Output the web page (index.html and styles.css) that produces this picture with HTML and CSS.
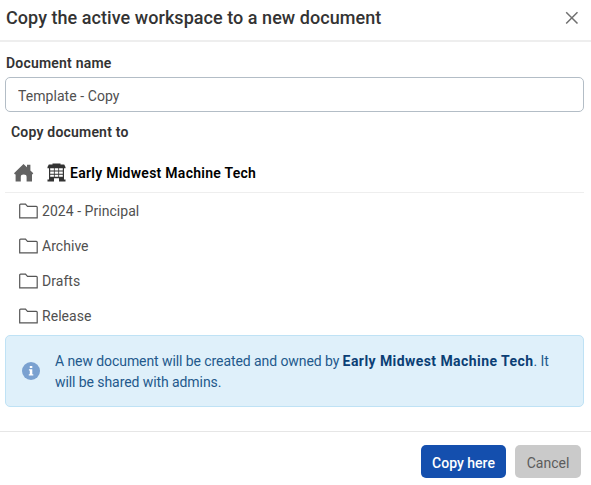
FILE: index.html
```html
<!DOCTYPE html>
<html lang="en">
<head>
<meta charset="utf-8">
<title>Copy workspace</title>
<link rel="stylesheet" href="styles.css">
</head>
<body>
<div class="dialog">
  <header class="header">
    <h1 class="title">Copy the active workspace to a new document</h1>
    <button class="close" aria-label="Close"><svg width="14" height="14" viewBox="0 0 14 14"><path d="M1.2 1.2 12.5 12.5M12.5 1.2 1.2 12.5"/></svg></button>
  </header>
  <main class="body">
    <label class="label" for="name">Document name</label>
    <input class="input" id="name" value="Template - Copy">
    <div class="label dest">Copy document to</div>
    <div class="crumbs">
      <svg class="home" width="20" height="19" viewBox="0 0 20 19"><path d="M0 10.2 9.5 1 13 4.3V1.7h3.4v5.8l2.9 2.7-1 1.2-.3-.2V18.4h-5.4v-4.5q0-2.3-2.9-2.3t-2.9 2.3v4.5H1.6v-7.2l-.5.3z"/></svg>
      <svg class="company" width="19" height="19" viewBox="0 0 19 19"><path fill-rule="evenodd" d="M5.5.4h8v1.1h3.7l1.3 2.6v1.1H17v11.4h1.5v1.9H12v-3.2H7v3.2H.5v-1.9H2V5.2H.5V4.1l1.3-2.6h3.7zM3.2 5.2v2.2h3.7V5.2zm4.5 0v2.2h3.6V5.2zm4.4 0v2.2h3.7V5.2zM3.2 8.5v2.2h3.7V8.5zm4.5 0v2.2h3.6V8.5zm4.4 0v2.2h3.7V8.5zM3.2 11.8v2h3.7v-2zm4.5 0v2h3.6v-2zm4.4 0v2h3.7v-2z"/></svg>
      <span class="crumb-name">Early Midwest Machine Tech</span>
    </div>
    <ul class="folders">
      <li class="folder"><svg width="19" height="16" viewBox="0 0 19 16"><path d="M.7 14.8V2.1q0-.9.9-.9h4.9l2 2.1h8.8q.9 0 .9.9v10.6z"/></svg><span>2024 - Principal</span></li>
      <li class="folder"><svg width="19" height="16" viewBox="0 0 19 16"><path d="M.7 14.8V2.1q0-.9.9-.9h4.9l2 2.1h8.8q.9 0 .9.9v10.6z"/></svg><span>Archive</span></li>
      <li class="folder"><svg width="19" height="16" viewBox="0 0 19 16"><path d="M.7 14.8V2.1q0-.9.9-.9h4.9l2 2.1h8.8q.9 0 .9.9v10.6z"/></svg><span>Drafts</span></li>
      <li class="folder"><svg width="19" height="16" viewBox="0 0 19 16"><path d="M.7 14.8V2.1q0-.9.9-.9h4.9l2 2.1h8.8q.9 0 .9.9v10.6z"/></svg><span>Release</span></li>
    </ul>
    <div class="notice">
      <svg class="info" width="18" height="18" viewBox="0 0 18 18"><circle cx="9" cy="9" r="9"/><path d="M7.8 3.9h2.5v2.2H7.8zM6.9 7.3h3.4v5h1v1.3H6.8v-1.3h1V8.6h-.9z"/></svg>
      <p class="notice-text">A new document will be created and owned by <strong>Early Midwest Machine Tech</strong>. It<br>will be shared with admins.</p>
    </div>
  </main>
  <footer class="footer">
    <button class="btn primary">Copy here</button>
    <button class="btn">Cancel</button>
  </footer>
</div>
</body>
</html>
```
FILE: styles.css
```css
* { box-sizing: border-box; }
body { margin: 0; background: #fff; font-family: Roboto, "Liberation Sans", sans-serif; font-size: 14px; color: #505050; }
button, input { font: inherit; }
.dialog { height: 485px; overflow: hidden; display: flex; flex-direction: column; }
.header { height: 42px; flex: none; display: flex; align-items: center; justify-content: space-between; padding: 0 12px 5px 6px; border-bottom: 2px solid #eee; }
.title { margin: 0; font-size: 18px; line-height: 24px; font-weight: 500; letter-spacing: .05px; color: #333; white-space: nowrap; }
.close { display: flex; padding: 0; border: 0; background: none; }
.close svg { fill: none; stroke: #707070; stroke-width: 1.5; }
.body { flex: none; height: 389px; padding: 11px 7px 0 5px; }
.label { display: block; height: 20px; line-height: 20px; padding-left: 1px; font-weight: 600; letter-spacing: .2px; color: #333; }
.input { display: block; width: 100%; height: 35px; margin-top: 4px; padding: 3px 12px 0; border: 1px solid #b3bdc6; border-radius: 5px; color: #505050; background: #fff; outline: 0; letter-spacing: .06px; }
.dest { margin-top: 10px; padding-left: 6px; }
.crumbs { display: flex; align-items: center; height: 51px; padding: 11px 0 0 9px; border-bottom: 1px solid #eee; color: #000; font-weight: 600; }
.home { fill: #626262; margin-right: 13px; }
.company { fill: #333; margin-right: 4px; }
.crumb-name { letter-spacing: .27px; line-height: 20px; }
.folders { list-style: none; margin: 0; padding: 0; }
.folder { display: flex; align-items: center; height: 35px; padding-left: 14px; gap: 4px; letter-spacing: .04px; }
.folder svg { fill: none; stroke: #555; stroke-width: 1.2; }
.notice { display: flex; align-items: center; height: 72px; margin-top: 2px; padding-left: 16px; background: #dff0fa; border: 1px solid #bfe2f5; border-radius: 5px; color: #23598c; }
.info { flex: none; fill: #7aa1d0; margin-right: 15px; }
.info path { fill: #fff; }
.notice-text { margin: 0; padding-top: 2px; line-height: 21px; white-space: nowrap; letter-spacing: -.08px; }
.notice-text strong { color: #0b3f75; font-weight: 700; letter-spacing: .43px; }
.footer { flex: 1; display: flex; gap: 9px; justify-content: flex-end; align-items: flex-start; padding: 13px 10px 0; border-top: 1px solid #e6e6e6; }
.btn { height: 33px; width: 66px; padding: 2px 0 0; border: 0; border-radius: 5px; background: #cacaca; color: #5c5c5c; white-space: nowrap; }
.primary { width: 85px; background: #144fae; color: #fff; font-weight: 500; }
```
